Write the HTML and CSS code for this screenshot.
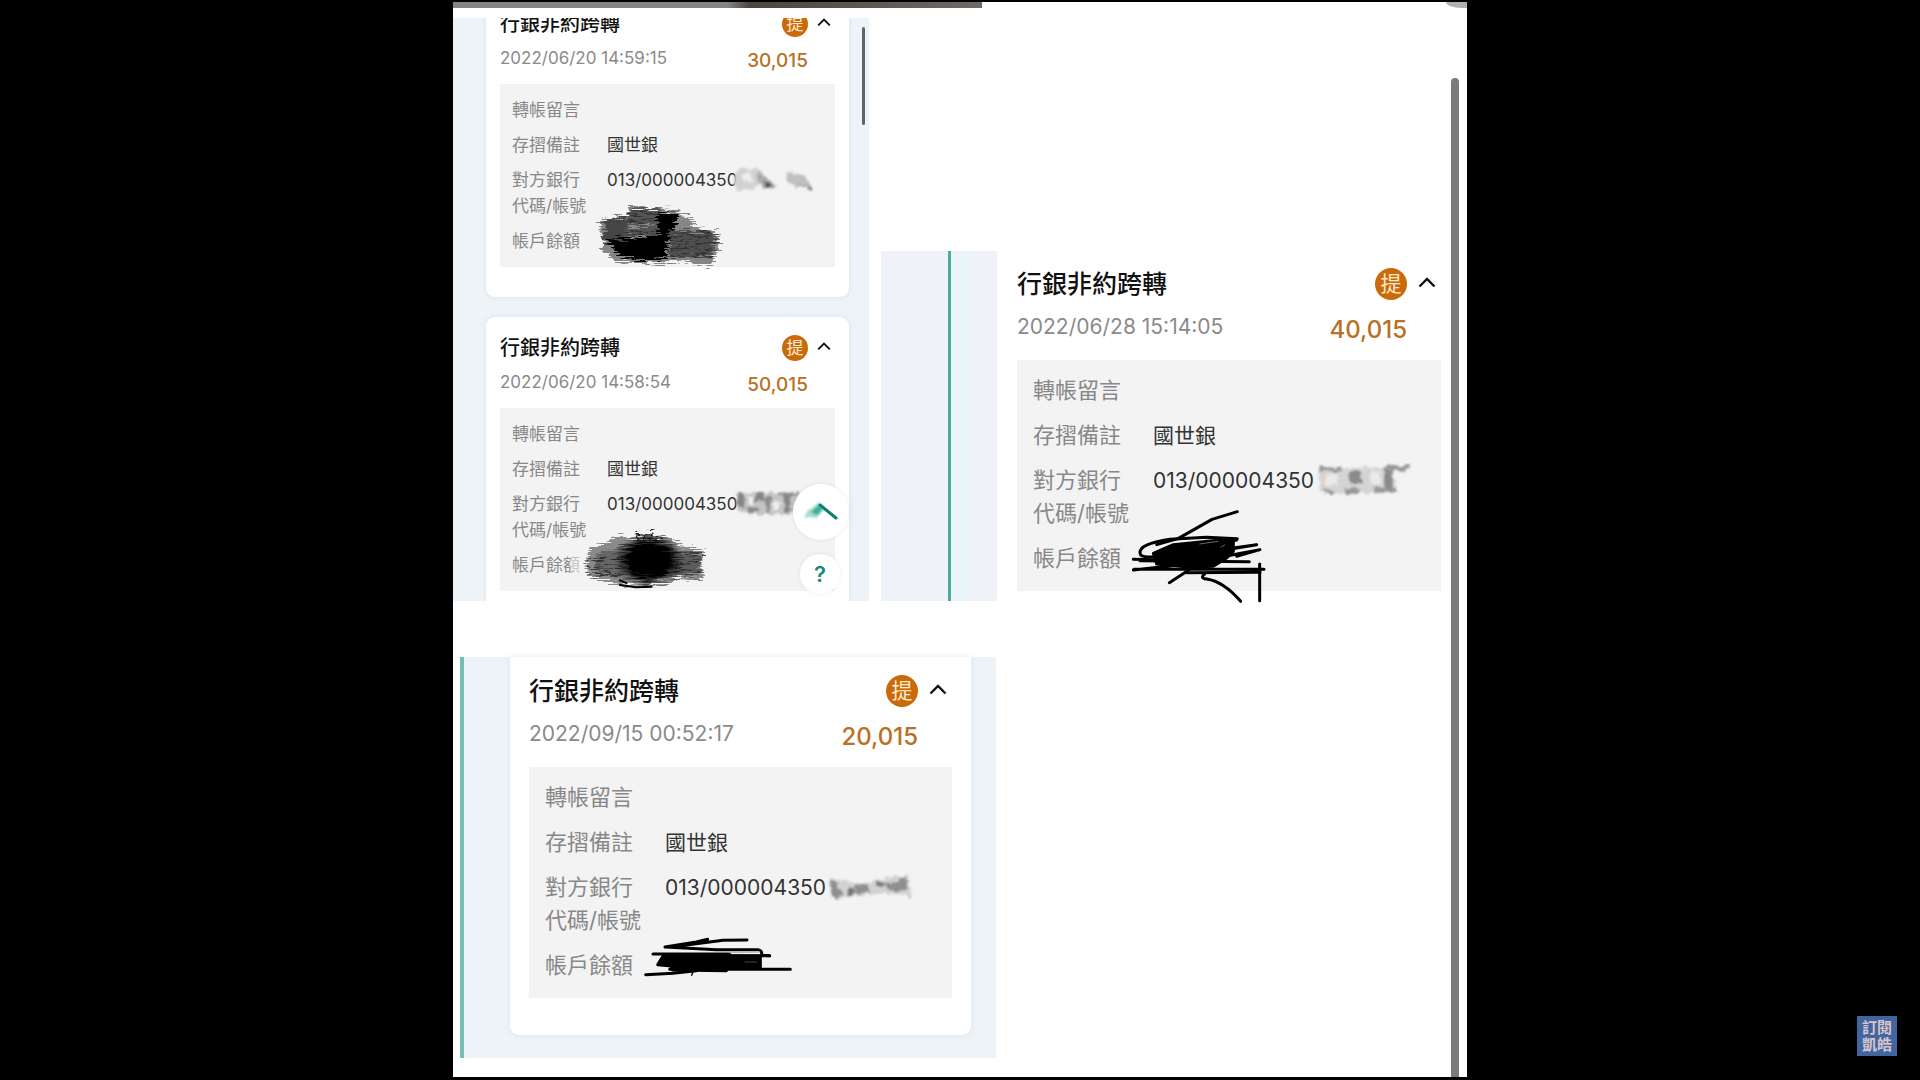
FILE: index.html
```
<!DOCTYPE html>
<html lang="zh-Hant">
<head>
  <meta charset="UTF-8">
  <meta name="viewport" content="width=device-width, initial-scale=1.0">
  <title>轉帳紀錄</title>
  <link rel="stylesheet" href="styles.css">
</head>
<body>
  <!-- 共用濾鏡：筆刷紋理、馬賽克 -->
  <svg class="defs" width="0" height="0" aria-hidden="true">
    <filter id="brush" x="-10%" y="-10%" width="120%" height="120%">
      <feTurbulence type="fractalNoise" baseFrequency="0.02 0.3" numOctaves="3" seed="4" result="n"/>
      <feDisplacementMap in="SourceGraphic" in2="n" scale="46" xChannelSelector="R" yChannelSelector="G"/>
      <feGaussianBlur stdDeviation="2.2"/>
    </filter>
    <filter id="smudge" x="-10%" y="-10%" width="120%" height="120%">
      <feTurbulence type="fractalNoise" baseFrequency="0.06" numOctaves="2" seed="7" result="n"/>
      <feDisplacementMap in="SourceGraphic" in2="n" scale="22" xChannelSelector="R" yChannelSelector="G"/>
      <feGaussianBlur stdDeviation="3"/>
    </filter>
    <filter id="soft">
      <feGaussianBlur stdDeviation="1.2"/>
    </filter>
    <radialGradient id="ink">
      <stop offset="0.62" stop-color="#000"/>
      <stop offset="1" stop-color="#000" stop-opacity="0"/>
    </radialGradient>
  </svg>

  <div class="board">
    <main class="sheet">
      <div class="top-bar"></div>

      <div class="row-top">
        <!-- 06/20 兩筆 -->
        <section class="phone phone-list">
          <article class="card card-first">
            <div class="card-head">
              <h2 class="card-title">行銀非約跨轉</h2>
              <span class="badge">提</span>
              <button class="btn-fold" aria-label="收合"><svg viewBox="0 0 18 11"><path d="M1.5 9.5 9 2l7.5 7.5"/></svg></button>
            </div>
            <div class="card-meta">
              <time>2022/06/20 14:59:15</time>
              <span class="amount">30,015</span>
            </div>
            <div class="detail">
              <dl>
                <div><dt>轉帳留言</dt><dd></dd></div>
                <div><dt>存摺備註</dt><dd>國世銀</dd></div>
                <div><dt>對方銀行<br>代碼/帳號</dt><dd>013/000004350</dd></div>
                <div><dt>帳戶餘額</dt><dd></dd></div>
              </dl>
              <svg class="mask mask-a" viewBox="850 498 246 84">
                <g filter="url(#smudge)">
                  <path d="M852 525 885 505 935 510 945 545 915 568 865 572z" fill="#d2d2d2"/>
                  <path d="M925 510 950 530 990 562 950 565 930 545z" fill="#aaa"/>
                  <path d="M945 545 975 556 960 566z" fill="#555"/>
                  <path d="M1010 512 1070 525 1092 568 1040 558 1015 545z" fill="#c0c0c0"/>
                  <path d="M1040 555 1092 560 1092 570z" fill="#888"/>
                  <path d="M880 520h30v25h-30z" fill="#eee"/>
                </g>
              </svg>
              <svg class="mask mask-b" viewBox="50 40 390 210">
                <g filter="url(#brush)">
                  <path d="M62 92 140 76 150 54 300 58 300 72 342 82 338 112 414 126 420 165 404 210 400 228 268 212 240 222 110 214 62 178 80 150 60 120z" fill="#858585"/>
                  <path d="M80 90 140 80 150 150 70 160z" fill="#444"/>
                  <path d="M150 60 240 55 240 140 135 140z" fill="#555"/>
                  <path d="M235 66 295 70 290 112 262 160 235 150z" fill="#000"/>
                  <path d="M80 150 265 142 258 208 180 212 120 195z" fill="#000"/>
                  <path d="M270 122 405 130 400 203 268 206z" fill="#505050"/>
                  <path d="M275 135h138M275 155h142M270 176h140M272 198h130" stroke="#303030" stroke-width="5" fill="none"/>
                  <path d="M150 72h80M140 92h90M140 128h90" stroke="#333" stroke-width="5" fill="none"/>
                  <path d="M145 108h80M300 92h34" stroke="#8a8a8a" stroke-width="8" fill="none"/>
                </g>
              </svg>
            </div>
          </article>

          <article class="card card-last">
            <div class="card-head">
              <h2 class="card-title">行銀非約跨轉</h2>
              <span class="badge">提</span>
              <button class="btn-fold" aria-label="收合"><svg viewBox="0 0 18 11"><path d="M1.5 9.5 9 2l7.5 7.5"/></svg></button>
            </div>
            <div class="card-meta">
              <time>2022/06/20 14:58:54</time>
              <span class="amount">50,015</span>
            </div>
            <div class="detail">
              <dl>
                <div><dt>轉帳留言</dt><dd></dd></div>
                <div><dt>存摺備註</dt><dd>國世銀</dd></div>
                <div><dt>對方銀行<br>代碼/帳號</dt><dd>013/000004350</dd></div>
                <div><dt>帳戶餘額</dt><dd></dd></div>
              </dl>
              <svg class="mask mask-c" viewBox="498 60 201 84">
                <g filter="url(#smudge)">
                  <path d="M505 68H690L672 132 560 134 505 118z" fill="#c4c4c4"/>
                  <path d="M506 68h20v45h-20zM560 66h28v28h-28zM645 75h20v52h-20z" fill="#858585"/>
                  <path d="M590 78h14v50h-14zM535 112h36v18h-36zM625 68h60v10h-60z" fill="#8c8c8c"/>
                  <path d="M535 80h20v25h-20zM612 95h20v25h-20z" fill="#eee"/>
                </g>
              </svg>
              <svg class="mask mask-d" viewBox="30 180 390 186">
                <path d="M6 262h34v48H6z" fill="#f3f3f3" opacity="0.6" filter="url(#smudge)"/>
                <g filter="url(#brush)">
                  <path d="M62 238 110 222 130 200 200 204 250 192 305 205 330 228 414 244 396 270 406 328 330 325 290 344 150 344 60 320 48 285z" fill="#8a8a8a"/>
                  <path d="M80 250 170 225 175 330 80 310z" fill="#666"/>
                  <path d="M305 235 395 248 390 316 305 325z" fill="#5c5c5c"/>
                  <path d="M62 266h100M54 292h110M64 314h96M310 255h95M310 280h86M310 305h90" stroke="#333" stroke-width="5" fill="none"/>
                  <path d="M205 192v20M225 196v16M248 184v22M270 194v16" stroke="#222" stroke-width="5"/>
                </g>
                <ellipse cx="240" cy="270" rx="104" ry="80" fill="url(#ink)" filter="url(#brush)"/>
                <path d="M150 344 200 352 250 350M150 330 175 340" stroke="#000" stroke-width="6" fill="none" filter="url(#soft)"/>
              </svg>
            </div>
          </article>

          <div class="scroll-thumb"></div>
          <button class="fab fab-edit" aria-label="工具">
            <svg viewBox="0 0 36 24">
              <path d="M1 18 5 10 9 8 16 2 21 8 14 18 6 17z" fill="#a5dbd0" filter="url(#soft)"/>
              <path d="M8 12 16 5 20 9 14 15z" fill="#3fae9b" filter="url(#soft)"/>
              <path d="M17 5 33 18" stroke="#0d7f72" stroke-width="3" stroke-linecap="round"/>
            </svg>
          </button>
          <button class="fab fab-help">?</button>
        </section>

        <!-- 06/28 -->
        <section class="phone-side">
          <div class="strip"></div>
          <article class="card card-lg">
            <div class="card-head">
              <h2 class="card-title">行銀非約跨轉</h2>
              <span class="badge">提</span>
              <button class="btn-fold" aria-label="收合"><svg viewBox="0 0 18 11"><path d="M1.5 9.5 9 2l7.5 7.5"/></svg></button>
            </div>
            <div class="card-meta">
              <time>2022/06/28 15:14:05</time>
              <span class="amount">40,015</span>
            </div>
            <div class="detail">
              <dl>
                <div><dt>轉帳留言</dt><dd></dd></div>
                <div><dt>存摺備註</dt><dd>國世銀</dd></div>
                <div><dt>對方銀行<br>代碼/帳號</dt><dd>013/000004350</dd></div>
                <div><dt>帳戶餘額</dt><dd></dd></div>
              </dl>
              <svg class="mask mask-e" viewBox="615 70 300 96">
                <g filter="url(#smudge)">
                  <path d="M628 86 780 80 850 84 862 158 720 158 630 156z" fill="#d4d4d4"/>
                  <path d="M718 92h38v36h-38zM822 84h26v62h-26z" fill="#8a8a8a"/>
                  <path d="M628 80h64v12h-64zM825 76h78l-20 14h-58zM705 142h44v18h-44zM640 146h26v14h-26zM790 142h70v14h-70z" fill="#999"/>
                  <path d="M645 100h38v34h-38zM782 92h28v38h-28z" fill="#eaeaea"/>
                </g>
              </svg>
              <svg class="mask mask-f" viewBox="60 200 420 288">
                <g fill="none" stroke="#000" stroke-width="9" stroke-linecap="round" stroke-linejoin="round">
                  <path d="M382 211 306 234 204 292 140 310"/>
                  <path d="M382 292 290 288 180 294 C120 304 88 314 90 336 Q92 350 130 346L380 296"/>
                  <path d="M70 354 160 356 440 310 300 330M70 386 200 372 450 325 380 345M72 384H462M90 358 418 361M230 394 450 393"/>
                  <path d="M178 424 240 384M392 480 Q340 420 290 413 C270 412 278 402 284 398M449 368V478"/>
                  <path d="M130 336 190 310 330 296 370 300 370 330 350 350 310 375 240 378 140 368z" fill="#000"/>
                </g>
                <path d="M268 308 325 300M345 310 332 318" stroke="#666" stroke-width="3"/>
              </svg>
            </div>
          </article>
        </section>
      </div>

      <!-- 09/15 -->
      <section class="phone phone-bottom">
        <article class="card card-lg">
          <div class="card-head">
            <h2 class="card-title">行銀非約跨轉</h2>
            <span class="badge">提</span>
            <button class="btn-fold" aria-label="收合"><svg viewBox="0 0 18 11"><path d="M1.5 9.5 9 2l7.5 7.5"/></svg></button>
          </div>
          <div class="card-meta">
            <time>2022/09/15 00:52:17</time>
            <span class="amount">20,015</span>
          </div>
          <div class="detail">
            <dl>
              <div><dt>轉帳留言</dt><dd></dd></div>
              <div><dt>存摺備註</dt><dd>國世銀</dd></div>
              <div><dt>對方銀行<br>代碼/帳號</dt><dd>013/000004350</dd></div>
              <div><dt>帳戶餘額</dt><dd></dd></div>
            </dl>
            <svg class="mask mask-g" viewBox="594 68 258 90">
              <g filter="url(#smudge)">
                <path d="M600 84 700 100 790 76 835 82 846 140 780 128 700 134 610 146z" fill="#d2d2d2"/>
                <path d="M598 88h14l28 44-28 18zM672 104h44v26h-44zM770 108l60-34v46h-60z" fill="#8f8f8f"/>
                <path d="M656 110h14v24h-14zM738 96h40v12h-40z" fill="#777"/>
              </g>
            </svg>
            <svg class="mask mask-h" viewBox="40 255 450 132">
              <g fill="none" stroke="#000" stroke-width="9" stroke-linecap="round" stroke-linejoin="round">
                <path d="M352 270 280 271 130 290M106 291 200 276 234 268M106 291 260 299 H385 Q398 300 396 316 L420 317"/>
                <path d="M70 312H300M420 317H300M48 374 130 370 200 362M120 358 H482"/>
                <path d="M186 376 190 366" stroke-width="4"/>
                <path d="M100 318H392V352H296L290 362 128 360 124 348 84 344z" fill="#000"/>
              </g>
              <path d="M300 308 390 306" stroke="#bbb" stroke-width="4"/>
              <path d="M345 336H382" stroke="#444" stroke-width="3"/>
            </svg>
          </div>
        </article>
      </section>
    </main>
    <div class="page-scroll"></div>
    <div class="corner"></div>
  </div>

  <a class="watermark" href="#">訂閱<br>凱皓</a>
</body>
</html>
```
FILE: styles.css
```
* {
  box-sizing: border-box;
}
body {
  margin: 0;
  background: #000;
  font-family: Inter, "Noto Sans CJK TC", sans-serif;
  color: #333;
}
h2, dl, dd {
  margin: 0;
}
button {
  padding: 0;
  border: none;
  background: none;
  cursor: pointer;
}
.defs {
  position: absolute;
}

.board {
  position: relative;
  display: flex;
  width: 53%;
  max-width: 1014px;
  min-height: calc(100vh - 5px);
  margin: 2px auto 3px;
  background: #fff;
  overflow: hidden;
}
.sheet {
  flex: 1;
  min-width: 0;
}
.top-bar {
  width: 53%;
  height: 6px;
  background: linear-gradient(90deg, #838383 0 52%, #4b453f 56%, #6f6a66);
}
.page-scroll {
  width: 8px;
  margin: 76px 8px 0 0;
  background: #7b7b7b;
  border-radius: 4px 4px 0 0;
}
.corner {
  position: absolute;
  top: 0;
  right: 0;
  width: 21px;
  height: 6px;
  background: #b0b0b0;
  border-bottom-left-radius: 16px 6px;
}

/* 上半部 */
.row-top {
  display: flex;
  align-items: flex-end;
  gap: 12px;
  margin-top: 10px;
}
.phone {
  position: relative;
  background: #eef3f7;
}
.phone-list {
  flex: 0 0 416px;
  padding: 0 20px 0 33px;
  overflow: hidden;
}
.scroll-thumb {
  position: absolute;
  top: 9px;
  right: 4px;
  width: 3px;
  height: 98px;
  background: #5d666d;
  border-radius: 2px;
}
.phone-side {
  flex: 1;
  display: flex;
}
.strip {
  width: 116px;
  background: linear-gradient(90deg, #eff3f8 67px, #4fa99f 67px 70px, #e9f5f9 70px 86px, #eff3f8 90px);
}

/* 下半部 */
.phone-bottom {
  width: 536px;
  margin: 56px 0 0 7px;
  padding: 0 25px 23px 46px;
  border-left: 4px solid #74bfb3;
}

/* 交易卡片 */
.card {
  background: #fff;
  border-radius: 9px;
  padding: 17px 14px 30px;
  box-shadow: 0 0 5px rgba(190, 215, 225, 0.5);
}
.card-first {
  margin: -25px 0 20px;
}
.card-last {
  padding-bottom: 10px;
  border-radius: 9px 9px 0 0;
}
.card-head {
  display: flex;
  align-items: center;
  height: 28px;
}
.card-title {
  flex: 1;
  font-size: 20px;
  line-height: 28px;
  font-weight: 500;
  color: #111;
}
.badge {
  width: 26px;
  height: 26px;
  border-radius: 50%;
  background: #cb6a0a;
  color: #ffe9cf;
  font-size: 17px;
  line-height: 26px;
  text-align: center;
}
.btn-fold {
  display: flex;
  width: 27px;
  padding: 0 4px 3px 9px;
}
.btn-fold svg {
  width: 100%;
}
.btn-fold path {
  fill: none;
  stroke: #111;
  stroke-width: 2.4;
}
.card-meta {
  display: flex;
  justify-content: space-between;
  align-items: flex-start;
  margin-top: 8px;
  padding-right: 27px;
}
.card-meta time {
  font-size: 17px;
  line-height: 24px;
  color: #8a8a8a;
}
.amount {
  font-size: 19px;
  line-height: 30px;
  font-weight: 500;
  color: #b87024;
}
.detail {
  position: relative;
  margin-top: 8px;
  padding: 13px 12px;
  background: #f3f3f3;
  font-size: 17px;
  line-height: 26px;
}
.detail dl {
  display: flex;
  flex-direction: column;
  gap: 9px;
}
.detail dl div {
  display: flex;
}
.detail dt {
  width: 95px;
  color: #888;
}

/* 大張卡片 */
.card-lg {
  flex: 1;
  padding: 17px 19px 37px;
  border-radius: 0 0 9px 9px;
}
.phone-side .card-lg {
  padding: 16px 10px 10px 20px;
  box-shadow: none;
}
.card-lg .card-head {
  height: 34px;
}
.card-lg .card-title {
  font-size: 25px;
  line-height: 34px;
}
.card-lg .badge {
  width: 32px;
  height: 32px;
  font-size: 21px;
  line-height: 32px;
}
.card-lg .btn-fold {
  width: 34px;
  padding: 0 5px 3px 11px;
}
.card-lg .card-meta {
  margin-top: 10px;
  padding-right: 34px;
}
.card-lg time {
  font-size: 21px;
  line-height: 32px;
}
.card-lg .amount {
  font-size: 24px;
  line-height: 38px;
}
.card-lg .detail {
  margin-top: 11px;
  padding: 14px 16px 16px;
  font-size: 22px;
  line-height: 33px;
}
.card-lg .detail dl {
  gap: 12px;
}
.card-lg .detail dt {
  width: 120px;
}
.card-lg .detail dd {
  font-size: 21px;
}

/* 塗抹遮蔽 */
.mask {
  position: absolute;
  overflow: visible;
}
.mask-a { left: 232px; top: 82px; width: 82px; }
.mask-b { left: 96px; top: 119px; width: 130px; }
.mask-c { left: 235px; top: 82px; width: 67px; }
.mask-d { left: 79px; top: 122px; width: 130px; }
.mask-e { left: 298px; top: 104px; width: 100px; }
.mask-f { left: 113px; top: 148px; width: 140px; }
.mask-g { left: 299px; top: 106px; width: 86px; }
.mask-h { left: 114px; top: 168px; width: 150px; }

/* 浮動按鈕 */
.fab {
  position: absolute;
  display: flex;
  align-items: center;
  justify-content: center;
  background: #fff;
  border-radius: 50%;
  box-shadow: 0 0 4px rgba(0, 0, 0, 0.08);
}
.fab-edit {
  right: 20px;
  bottom: 61px;
  width: 56px;
  height: 56px;
}
.fab-edit svg {
  width: 36px;
  fill: none;
}
.fab-help {
  right: 29px;
  bottom: 7px;
  width: 40px;
  height: 40px;
  font: 600 22px Inter, sans-serif;
  color: #168a7c;
}

.watermark {
  position: fixed;
  right: 23px;
  bottom: 24px;
  width: 40px;
  height: 40px;
  padding-top: 3px;
  background: #41659f;
  color: #d8c3cd;
  font-size: 15px;
  line-height: 17px;
  font-weight: 700;
  text-align: center;
  text-decoration: none;
}
```
